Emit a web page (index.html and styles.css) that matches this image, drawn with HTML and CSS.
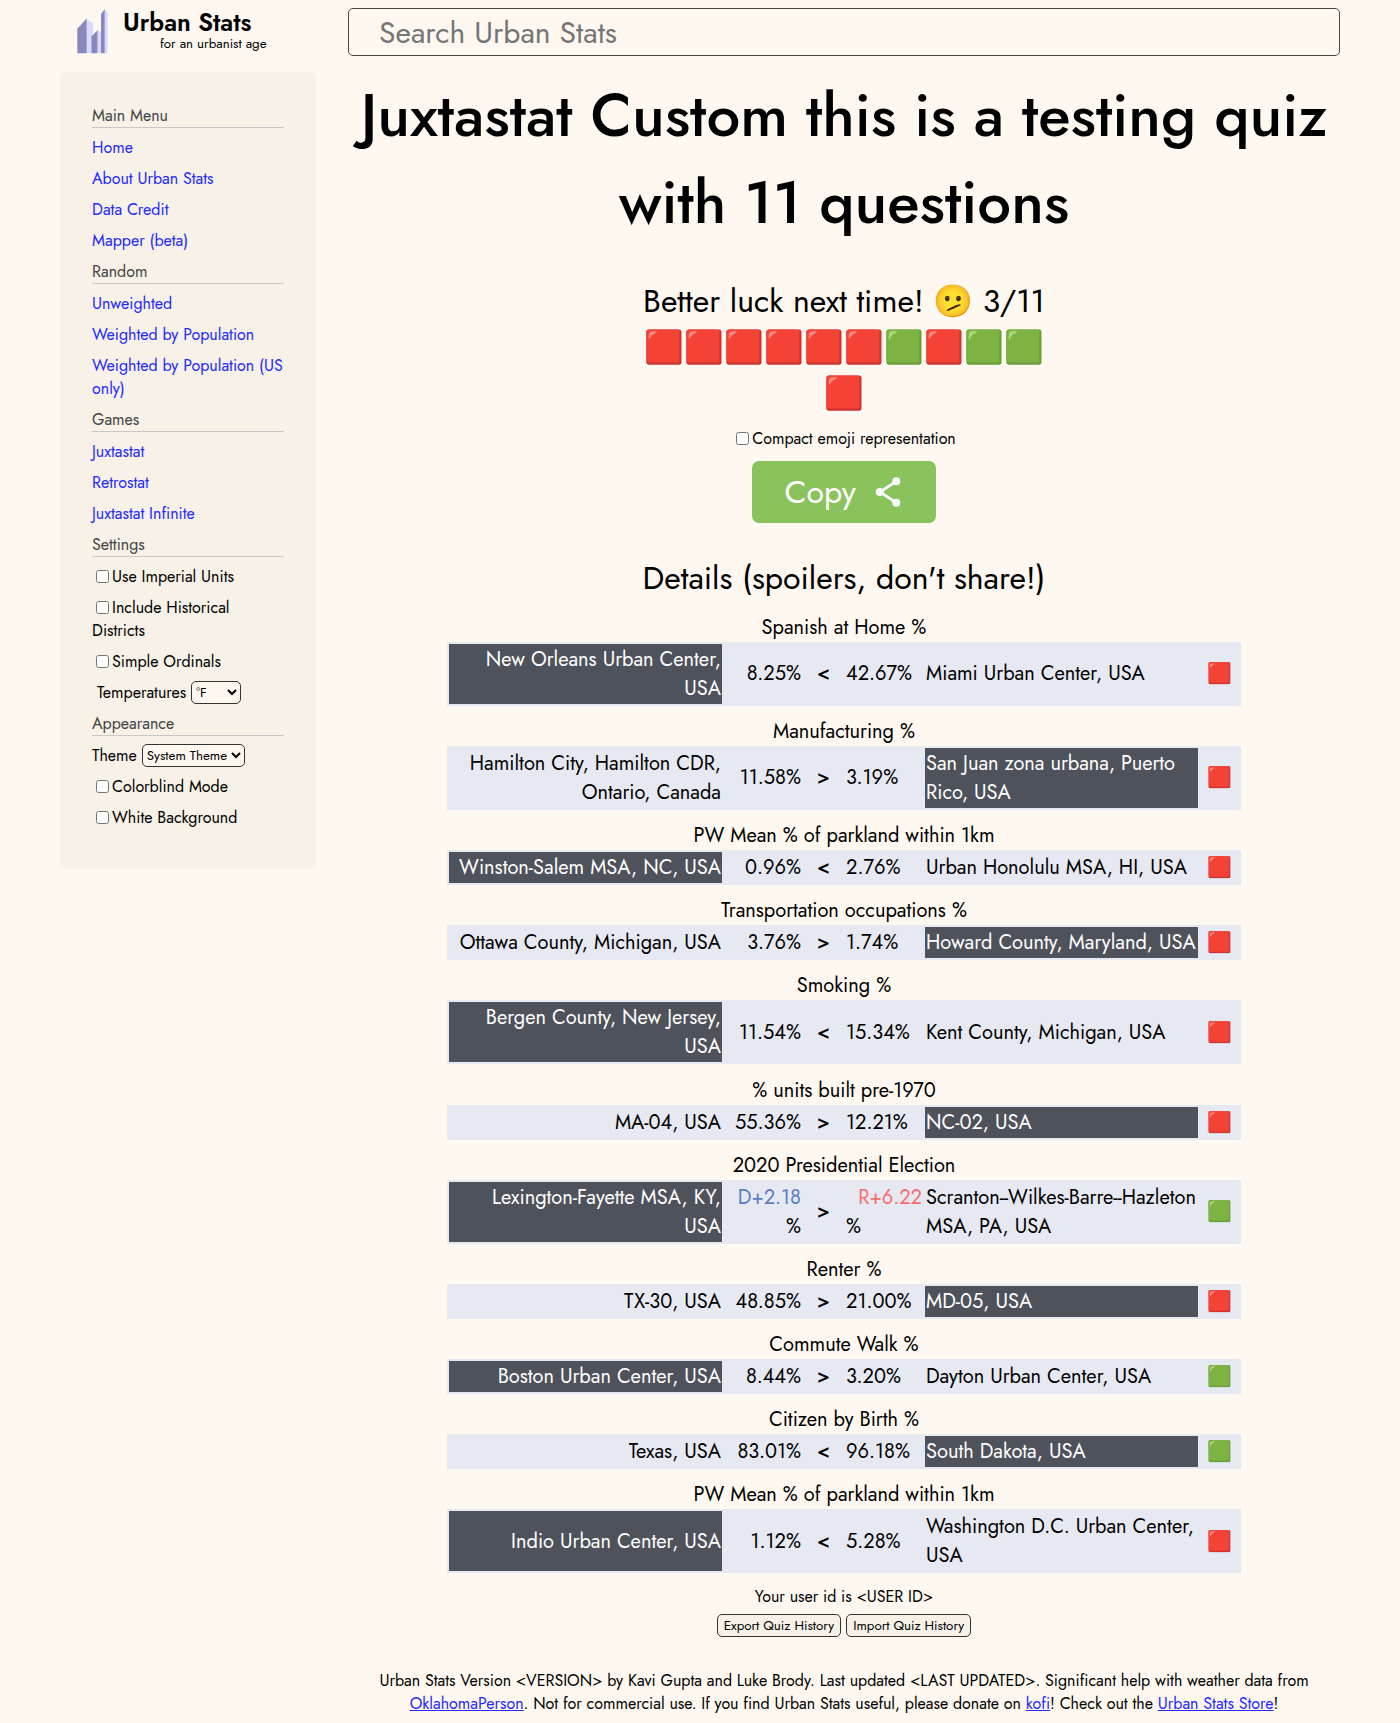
FILE: index.html
```html
<!DOCTYPE html>
<html lang="en">
<head>
<meta charset="utf-8">
<title>Juxtastat</title>
<link rel="stylesheet" href="styles.css">
</head>
<body>
<div class="page">
  <aside class="left">
    <a class="logo" href="#">
      <svg class="logo-mark" width="31" height="45" viewBox="0 0 31 45">
        <g fill="#d9d9ff"><path d="M9.7 9.5 16 14.800V44.300H9.700Z"/><path d="M20.500 21.300 25 24.300V44.300h-4.500Z"/><path d="M27.700 .3 30.600 3.300V44.300h-3Z"/></g>
        <g fill="#8888bd"><path d="M.3 19.800 9.700 9.500V44.300H.3Z"/><path d="M14.500 27.300 20.500 21.300V44.300h-6Z"/><path d="M24 4.800 27.700 .3V44.300H24Z"/></g>
      </svg>
      <span class="logo-text"><span class="logo-name">Urban Stats</span><span class="logo-tag">for an urbanist age</span></span>
    </a>
    <nav class="sidebar">
      <div class="section">Main Menu</div>
      <a href="#">Home</a>
      <a href="#">About Urban Stats</a>
      <a href="#">Data Credit</a>
      <a href="#">Mapper (beta)</a>
      <div class="section">Random</div>
      <a href="#">Unweighted</a>
      <a href="#">Weighted by Population</a>
      <a href="#">Weighted by Population (US only)</a>
      <div class="section">Games</div>
      <a href="#">Juxtastat</a>
      <a href="#">Retrostat</a>
      <a href="#">Juxtastat Infinite</a>
      <div class="section">Settings</div>
      <label><input type="checkbox">Use Imperial Units</label>
      <label><input type="checkbox">Include Historical Districts</label>
      <label><input type="checkbox">Simple Ordinals</label>
      <div class="setting temps"><span>Temperatures</span><select class="sel-temp"><option>°F</option></select></div>
      <div class="section">Appearance</div>
      <div class="setting"><span>Theme</span><select class="sel-theme"><option>System Theme</option></select></div>
      <label><input type="checkbox">Colorblind Mode</label>
      <label><input type="checkbox">White Background</label>
    </nav>
  </aside>
  <main class="main">
    <input class="search" type="text" placeholder="Search Urban Stats">
    <h1>Juxtastat Custom this is a testing quiz with 11 questions</h1>
    <div class="summary">
      <div>Better luck next time! 🫤 3/11</div>
      <div>🟥🟥🟥🟥🟥🟥🟩🟥🟩🟩</div>
      <div>🟥</div>
    </div>
    <label class="compact"><input type="checkbox">Compact emoji representation</label>
    <button class="copy">Copy
      <svg width="26" height="30" viewBox="0 0 26 30"><path d="M21 4.500 5 15 21 25.500" fill="none" stroke="#fafafa" stroke-width="2.800"/><g fill="#fafafa"><circle cx="21.300" cy="4.300" r="4"/><circle cx="4.700" cy="15" r="4"/><circle cx="21.300" cy="25.700" r="4"/></g></svg>
    </button>
    <div class="details">Details (spoilers, don't share!)</div>
    <div class="quiz">
      <section><h2>Spanish at Home %</h2><table><tr><td class="a pick">New Orleans Urban Center, USA</td><td class="va">8.25%</td><td class="op">&lt;</td><td class="vb">42.67%</td><td class="b">Miami Urban Center, USA</td><td class="res">🟥</td></tr></table></section>
      <section><h2>Manufacturing %</h2><table><tr><td class="a">Hamilton City, Hamilton CDR, Ontario, Canada</td><td class="va">11.58%</td><td class="op">&gt;</td><td class="vb">3.19%</td><td class="b pick">San Juan zona urbana, Puerto Rico, USA</td><td class="res">🟥</td></tr></table></section>
      <section><h2>PW Mean % of parkland within 1km</h2><table><tr><td class="a pick">Winston-Salem MSA, NC, USA</td><td class="va">0.96%</td><td class="op">&lt;</td><td class="vb">2.76%</td><td class="b">Urban Honolulu MSA, HI, USA</td><td class="res">🟥</td></tr></table></section>
      <section><h2>Transportation occupations %</h2><table><tr><td class="a">Ottawa County, Michigan, USA</td><td class="va">3.76%</td><td class="op">&gt;</td><td class="vb">1.74%</td><td class="b pick">Howard County, Maryland, USA</td><td class="res">🟥</td></tr></table></section>
      <section><h2>Smoking %</h2><table><tr><td class="a pick">Bergen County, New Jersey, USA</td><td class="va">11.54%</td><td class="op">&lt;</td><td class="vb">15.34%</td><td class="b">Kent County, Michigan, USA</td><td class="res">🟥</td></tr></table></section>
      <section><h2>% units built pre-1970</h2><table><tr><td class="a">MA-04, USA</td><td class="va">55.36%</td><td class="op">&gt;</td><td class="vb">12.21%</td><td class="b pick">NC-02, USA</td><td class="res">🟥</td></tr></table></section>
      <section><h2>2020 Presidential Election</h2><table><tr><td class="a pick">Lexington-Fayette MSA, KY, USA</td><td class="va"><span class="dem">D+2.18</span> %</td><td class="op">&gt;</td><td class="vb"><span class="rep">R+6.22</span>%</td><td class="b">Scranton--Wilkes-Barre--Hazleton MSA, PA, USA</td><td class="res">🟩</td></tr></table></section>
      <section><h2>Renter %</h2><table><tr><td class="a">TX-30, USA</td><td class="va">48.85%</td><td class="op">&gt;</td><td class="vb">21.00%</td><td class="b pick">MD-05, USA</td><td class="res">🟥</td></tr></table></section>
      <section><h2>Commute Walk %</h2><table><tr><td class="a pick">Boston Urban Center, USA</td><td class="va">8.44%</td><td class="op">&gt;</td><td class="vb">3.20%</td><td class="b">Dayton Urban Center, USA</td><td class="res">🟩</td></tr></table></section>
      <section><h2>Citizen by Birth %</h2><table><tr><td class="a">Texas, USA</td><td class="va">83.01%</td><td class="op">&lt;</td><td class="vb">96.18%</td><td class="b pick">South Dakota, USA</td><td class="res">🟩</td></tr></table></section>
      <section><h2>PW Mean % of parkland within 1km</h2><table><tr><td class="a pick">Indio Urban Center, USA</td><td class="va">1.12%</td><td class="op">&lt;</td><td class="vb">5.28%</td><td class="b">Washington D.C. Urban Center, USA</td><td class="res">🟥</td></tr></table></section>
    </div>
    <div class="user">Your user id is &lt;USER ID&gt;</div>
    <div class="history"><button>Export Quiz History</button><button>Import Quiz History</button></div>
    <footer>Urban Stats Version &lt;VERSION&gt; by Kavi Gupta and Luke Brody. Last updated &lt;LAST UPDATED&gt;. Significant help with weather data from <a href="#">OklahomaPerson</a>. Not for commercial use. If you find Urban Stats useful, please donate on <a href="#">kofi</a>! Check out the <a href="#">Urban Stats Store</a>!</footer>
  </main>
</div>
</body>
</html>
```
FILE: styles.css
```css
* { box-sizing: border-box; }
body {
  margin: 0;
  background: #fff8f0;
  color: #000;
  font: 16px Jost, Lato, sans-serif;
}
a { color: #222aff; }
input[type="checkbox"] { margin: 3px 3px 3px 4px; vertical-align: -1px; }
button, select, input { font-family: inherit; }

.page {
  display: flex;
  align-items: flex-start;
  gap: 32px;
  width: 1280px;
  margin: 0 auto;
}

/* Left column */
.left { width: 256px; flex: none; }
.logo {
  display: flex;
  gap: 15.5px;
  height: 72px;
  padding: 9px 0 0 16.5px;
  color: #000;
  text-decoration: none;
}
.logo-mark { flex: none; }
.logo-text { display: flex; flex-direction: column; }
.logo-name { font-size: 24.7px; line-height: 27px; font-weight: 600; }
.logo-tag { font-size: 13.33px; line-height: 16px; padding-left: 37px; }
.sidebar {
  display: flex;
  flex-direction: column;
  gap: 8px;
  padding: 32px 32px 40px;
  border-radius: 5px;
  background: #f7f1e8;
}
.sidebar a { text-decoration: none; }
.section { color: #444; border-bottom: 1px solid #c8c8c8; }
.setting { display: flex; align-items: center; gap: 5px; height: 23px; }
.temps { padding-left: 5px; }
select {
  height: 23px;
  padding: 0;
  border: 1px solid #333;
  border-radius: 5px;
  background: #fff8f0;
  color: #000;
  font-size: 13.333px;
}
.sel-temp { width: 50px; }
.sel-theme { width: 103px; }

/* Main column */
.main {
  display: flex;
  flex-direction: column;
  align-items: center;
  width: 992px;
  padding-top: 8px;
}
.search {
  width: 100%;
  height: 48px;
  padding: 0 30px;
  border: 1px solid #444;
  border-radius: 5px;
  background: #fff8f0;
  font-size: 30px;
}
h1 {
  margin: 16px 0 0;
  font-size: 60px;
  line-height: 87px;
  font-weight: 500;
  text-align: center;
}
.summary {
  margin-top: 32px;
  font-size: 32px;
  line-height: 46px;
  text-align: center;
}
.compact { height: 23px; margin-top: 11px; }
.copy {
  display: flex;
  align-items: center;
  gap: 19.4px;
  width: 184px;
  height: 62px;
  margin-top: 11px;
  padding: 0 32.6px;
  border: 0;
  border-radius: 7px;
  background: #8ac35b;
  color: #fff;
  font-size: 32px;
}
.details { margin-top: 32px; font-size: 32px; line-height: 46px; }

/* Per-question breakdown */
.quiz {
  display: flex;
  flex-direction: column;
  gap: 11.15px;
  margin-top: 11.8px;
  width: 794px;
  font-size: 20px;
  line-height: 29px;
}
h2 { margin: 0; font-size: 20px; font-weight: 400; text-align: center; }
table {
  width: 794px;
  table-layout: fixed;
  border-spacing: 2px;
  background: #e6e9f1;
}
td { padding: 1px; }
.a { width: 273px; text-align: right; }
.va { width: 78px; text-align: right; }
.op { width: 39px; text-align: center; font-weight: 500; }
.vb { width: 78px; }
.b { width: 273px; }
.res { text-align: center; }
.pick { background: #4e525a; color: #fff; }
.dem { color: #5a7dc3; }
.rep { display: block; text-align: right; color: #f96d6d; }

.user { margin-top: 12.2px; }
.history { display: flex; gap: 5px; margin-top: 5.500px; }
.history button {
  height: 23px;
  padding: 0 6px;
  border: 1px solid #333;
  border-radius: 5px;
  background: #f7f1e8;
  color: #000;
  font-size: 13.333px;
}
footer { margin-top: 32px; padding: 0 20px 8px; text-align: center; }
```
